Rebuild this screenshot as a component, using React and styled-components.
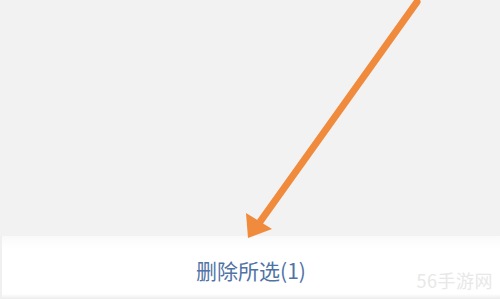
import styled, { createGlobalStyle } from "styled-components";

const GlobalStyle = createGlobalStyle`
  html, body {
    margin: 0;
    padding: 0;
    background: #f2f2f2;
  }
  * {
    box-sizing: border-box;
  }
`;

export default function App() {
  return (
    <>
      <GlobalStyle />
      <StyledScreen>
        <StyledContent />
        <StyledActionBar>
          <StyledDeleteButton>删除所选(1)</StyledDeleteButton>
        </StyledActionBar>
        <StyledArrow viewBox="0 0 500 299" aria-hidden="true">
          <line
            x1="417"
            y1="2"
            x2="257"
            y2="226"
            stroke="#f08a3c"
            strokeWidth="7"
            strokeLinecap="round"
          />
          <polygon points="248,238 246,213 272,229" fill="#f08a3c" />
        </StyledArrow>
        <StyledWatermark>56手游网</StyledWatermark>
      </StyledScreen>
    </>
  );
}

const StyledScreen = styled.div`
  position: relative;
  width: 500px;
  height: 299px;
  display: flex;
  flex-direction: column;
  overflow: hidden;
  font-family: "Noto Sans CJK SC", "Noto Sans", sans-serif;
`;

const StyledContent = styled.div`
  flex: 1;
  background: #f2f2f2;
`;

const StyledActionBar = styled.div`
  height: 63px;
  display: flex;
  justify-content: center;
  align-items: center;
  padding-top: 4px;
  background: linear-gradient(#f9f9f9, #ffffff 20%, #ffffff 92%, #ececec);
  border-left: 2px solid #f0f0f0;
`;

const StyledDeleteButton = styled.button`
  border: none;
  background: none;
  padding: 0;
  font-family: inherit;
  font-size: 21px;
  color: #5073a6;
  cursor: pointer;
`;

const StyledArrow = styled.svg`
  position: absolute;
  inset: 0;
  width: 500px;
  height: 299px;
`;

const StyledWatermark = styled.div`
  position: absolute;
  right: 7px;
  bottom: 6px;
  font-size: 18px;
  color: #e8e8e8;
  letter-spacing: 0.5px;
`;
